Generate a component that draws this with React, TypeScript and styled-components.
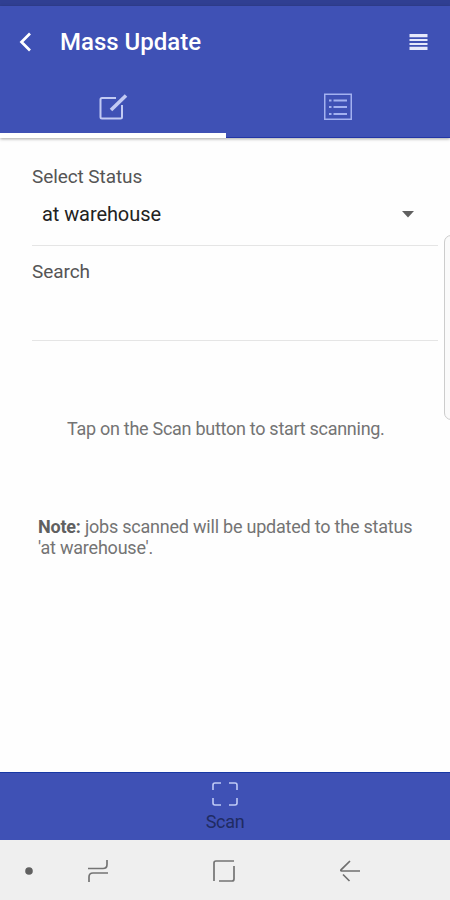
import React from "react";
import styled, { createGlobalStyle } from "styled-components";

const Global = createGlobalStyle`
  * { box-sizing: border-box; }
  body { margin: 0; background: #fff; font-family: Roboto, "Liberation Sans", sans-serif; }
  svg { display: block; }
`;
const Screen = styled.div`
  position: relative;
  width: 450px;
  height: 900px;
  display: flex;
  flex-direction: column;
  overflow: hidden;
  background: #fefefe;
`;
const StatusStrip = styled.div`
  height: 6px;
  flex: none;
  background: #303f92;
`;
const Header = styled.header`
  flex: none;
  height: 132px;
  display: flex;
  flex-direction: column;
  background: #3f51b5;
  box-shadow: 0 1px 3px rgba(0, 0, 0, 0.35);
`;
const TitleBar = styled.div`
  height: 72px;
  display: flex;
  align-items: center;
  padding: 0 22px 0 18px;
`;
const Title = styled.h1`
  flex: 1;
  margin: 0 0 0 26px;
  font-size: 24px;
  line-height: 28px;
  font-weight: 500;
  color: #fff;
`;
const Tabs = styled.nav`
  flex: 1;
  display: grid;
  grid-template-columns: 226px 224px;
`;
const Tab = styled.div<{ $active?: boolean }>`
  display: flex;
  justify-content: center;
  padding-top: 14px;
  border-bottom: ${(p) => (p.$active ? "5px solid #fff" : "1px solid #2335a5")};
`;
const Content = styled.main`
  flex: 1;
  display: flex;
  flex-direction: column;
  padding: 27px 12px 0 32px;
`;
const Field = styled.section<{ $height: number }>`
  height: ${(p) => p.$height}px;
  flex: none;
  border-bottom: 1px solid #e5e5e5;
`;
const Label = styled.div`
  font-size: 19px;
  line-height: 24px;
  letter-spacing: -0.08px;
  color: #555;
`;
const SearchLabel = styled(Label)`
  padding-top: 14px;
`;
const Select = styled.div`
  display: flex;
  justify-content: space-between;
  align-items: center;
  height: 28px;
  margin-top: 11px;
  padding: 0 24px 0 10px;
  font-size: 20px;
  letter-spacing: -0.08px;
  color: #222;
`;
const Hint = styled.p`
  margin: 76px 0 0 35px;
  font-size: 18px;
  line-height: 24px;
  letter-spacing: -0.28px;
  white-space: nowrap;
  color: #747474;
`;
const Note = styled.p`
  margin: 76px 0 0 6px;
  font-size: 18px;
  line-height: 20.5px;
  letter-spacing: -0.22px;
  white-space: nowrap;
  color: #747474;
  b { font-weight: 700; color: #606060; }
`;
const EdgeHandle = styled.div`
  position: absolute;
  top: 235px;
  right: -8px;
  width: 14px;
  height: 185px;
  border: 1px solid #ccc;
  border-radius: 8px;
  background: #fafafa;
`;
const ScanBar = styled.button`
  flex: none;
  height: 68px;
  display: flex;
  flex-direction: column;
  align-items: center;
  padding: 9px 0 0;
  border: 0;
  border-top: 1px solid #1738a5;
  background: #3f51b5;
  font-family: inherit;
`;
const ScanText = styled.span`
  margin-top: 4px;
  font-size: 18px;
  line-height: 24px;
  letter-spacing: -0.3px;
  color: #202b62;
`;
const NavBar = styled.footer`
  flex: none;
  height: 60px;
  display: grid;
  grid-template-columns: 58px 80px 172px 79px;
  align-items: center;
  justify-items: center;
  padding-top: 2px;
  background: #efefef;
`;

export default function App() {
  return (
    <>
      <Global />
      <Screen>
        <StatusStrip />
        <Header>
          <TitleBar>
            <svg width="16" height="22" viewBox="0 0 16 22" fill="none" stroke="#fff" strokeWidth="2.7">
              <path d="M12 2.500 3.500 11l8.500 8.500" />
            </svg>
            <Title>Mass Update</Title>
            <svg width="19" height="18" viewBox="0 0 19 18" fill="#e6e9fb">
              <path d="M.5 1h18v3.300H.5zM.5 6h18v2H.5zM.5 10h18v2H.5zM.5 13.700h18V17H.5z" />
            </svg>
          </TitleBar>
          <Tabs>
            <Tab $active>
              <svg width="30" height="30" viewBox="0 0 30 30" fill="none" stroke="#c2caf3" strokeWidth="2">
                <path d="M18 6H4Q2.500 6 2.500 7.500V25q0 1.500 1.500 1.500H22.500q1.500 0 1.500-1.500V13" />
                <path d="M13 18 28 3.500" strokeWidth="3.600" />
              </svg>
            </Tab>
            <Tab>
              <svg width="30" height="30" viewBox="0 0 30 30" fill="none" stroke="#a3b1f0" strokeWidth="1.500">
                <rect x="1.750" y="2.250" width="26.500" height="25" />
                <path d="M6 8.500h2.500M10.500 8.500H24M6 15h2.500M10.500 15H24M6 22h2.500M10.500 22H24" strokeWidth="1.800" />
              </svg>
            </Tab>
          </Tabs>
        </Header>
        <Content>
          <Field $height={81}>
            <Label>Select Status</Label>
            <Select>
              at warehouse
              <svg width="12" height="7" viewBox="0 0 12 7" fill="#606060"><path d="M0 0h12L6 6.500z" /></svg>
            </Select>
          </Field>
          <Field $height={95}>
            <SearchLabel>Search</SearchLabel>
          </Field>
          <Hint>Tap on the Scan button to start scanning.</Hint>
          <Note><b>Note:</b> jobs scanned will be updated to the status<br />'at warehouse'.</Note>
        </Content>
        <ScanBar>
          <svg width="26" height="24" viewBox="0 0 26 24" fill="none" stroke="#c0caf5" strokeWidth="1.600">
            <path d="M1 8V3q0-2 2-2h6M17 1h6q2 0 2 2v5M25 16v5q0 2-2 2h-6M9 23H3q-2 0-2-2v-5" />
          </svg>
          <ScanText>Scan</ScanText>
        </ScanBar>
        <NavBar>
          <svg width="8" height="8" viewBox="0 0 8 8"><circle cx="4" cy="4" r="3.800" fill="#606060" /></svg>
          <svg width="20" height="24" viewBox="0 0 20 24" fill="none" stroke="#747474" strokeWidth="1.700">
            <path d="M0 9.500h15q4 0 4-4V1M20 14H5q-4 0-4 4v5" />
          </svg>
          <svg width="22" height="22" viewBox="0 0 22 22" fill="none" stroke="#747474" strokeWidth="1.700">
            <path d="M1 21V3q0-2 2-2h18M21 6v13q0 2-2 2H6" />
          </svg>
          <svg width="20" height="22" viewBox="0 0 20 22" fill="none" stroke="#707070" strokeWidth="1.700">
            <path d="M10 1 1 9.800Q.5 11 1.500 11H20M3 14.500 9.500 21" />
          </svg>
        </NavBar>
        <EdgeHandle />
      </Screen>
    </>
  );
}
